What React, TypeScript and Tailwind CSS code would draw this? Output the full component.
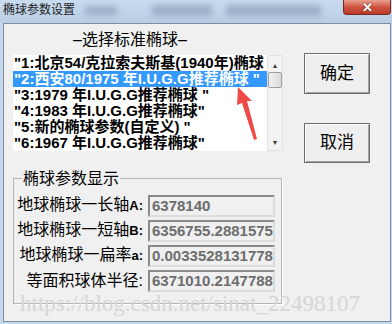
import React from 'react'

const rows = [
  '"1:北京54/克拉索夫斯基(1940年)椭球 "',
  '"2:西安80/1975 年I.U.G.G推荐椭球 "',
  '"3:1979 年I.U.G.G推荐椭球 "',
  '"4:1983 年I.U.G.G推荐椭球"',
  '"5:新的椭球参数(自定义)  "',
  '"6:1967 年I.U.G.G推荐椭球"',
]

const params = [
  { label: '地球椭球一长轴', tag: 'A:', value: '6378140' },
  { label: '地球椭球一短轴', tag: 'B:', value: '6356755.28815753' },
  { label: '地球椭球一扁率', tag: 'a:', value: '0.00335281317789' },
  { label: '等面积球体半径:', tag: '', value: '6371010.21477885' },
]

const cjk = { fontFamily: '"Liberation Sans", "Noto Sans CJK SC", sans-serif' }

function Button({ children, h }: { children: React.ReactNode; h: string }) {
  return (
    <div className={`w-[66px] ${h} border border-[#6f6f6f] bg-[#efefef] shadow-[inset_1px_1px_0_#ffffff,inset_-1px_-1px_0_#a0a0a0] flex items-center justify-center text-[17px] text-black`}>
      {children}
    </div>
  )
}

export default function App() {
  return (
    <div className="relative w-[392px] h-[324px] overflow-hidden bg-[#c4d8ee]" style={cjk}>
      {/* title bar */}
      <div className="h-[23px] flex items-start bg-gradient-to-b from-[#c9dbef] to-[#b8cde4]">
        <span className="ml-[3px] mt-[3px] text-[12px] leading-[14px] text-[#1c1c1c]">椭球参数设置</span>
        <span className="ml-[10px] mt-[6px] w-[32px] h-[9px] bg-[#8197b0] blur-[3px] opacity-60" />
        <span className="ml-[35px] mt-[5px] w-[60px] h-[11px] bg-[#8197b0] blur-[3px] opacity-60" />
        <span className="ml-[14px] mt-[5px] w-[95px] h-[11px] bg-[#8197b0] blur-[3px] opacity-60" />
        <div className="ml-auto mr-[1px] w-[48px] h-[15px] rounded-b-[4px] border border-t-0 border-[#7a2a24] bg-gradient-to-b from-[#e9a191] via-[#d0533f] to-[#b9392a] flex items-center justify-center">
          <span className="text-white text-[13px] font-bold leading-none [text-shadow:0_0_2px_#5a1a14]">✕</span>
        </div>
      </div>

      {/* client area */}
      <div className="ml-[3px] mr-[1px] h-[299px] border border-[#7f8e9f] bg-[#f0f0f0]">
        <div className="flex">
          <div className="ml-[9px] w-[270px]">
            <div className="h-[31px] pt-[8px] pl-[60px] text-[16px] leading-[16px] text-black">–选择标准椭球–</div>
            <div className="flex h-[96px] bg-white">
              <div className="flex-1 overflow-hidden">
                {rows.map((r, i) => (
                  <div
                    key={i}
                    className={`h-[16px] pl-[1px] whitespace-nowrap text-[15px] leading-[16px] font-bold ${
                      i === 1 ? 'bg-[#3399ff] text-white' : 'text-black'
                    }`}
                  >
                    {r}
                  </div>
                ))}
              </div>
              <div className="w-[16px] border border-[#e2e2e2] bg-[#f3f3f3] flex flex-col items-center">
                <span className="mt-[6px] text-[7px] leading-[7px] text-[#404040]">▲</span>
                <div className="mt-[3px] w-[14px] h-[16px] rounded-[2px] border border-[#9d9d9d] bg-gradient-to-r from-[#f2f2f2] to-[#dcdcdc]" />
                <span className="mt-auto mb-[4px] text-[7px] leading-[7px] text-[#404040]">▼</span>
              </div>
            </div>
          </div>
          <div className="ml-[21px] pt-[29px] flex flex-col gap-[29px]">
            <Button h="h-[41px]">确定</Button>
            <Button h="h-[40px]">取消</Button>
          </div>
        </div>

        {/* group box */}
        <fieldset className="ml-[9px] mt-[7px] w-[269px] h-[134px] border border-[#b5b5b5] shadow-[1px_1px_0_#ffffff] pl-[1px]">
          <legend className="ml-[7px] px-[1px] text-[16px] leading-[17px] text-black">椭球参数显示</legend>
          <div className="mt-[8px] flex flex-col gap-[3px]">
            {params.map((p) => (
              <div key={p.label} className="flex items-center h-[22px]">
                <div className="w-[128px] flex items-baseline justify-end whitespace-nowrap text-black">
                  <span className="text-[16px] leading-[18px]">{p.label}</span>
                  {p.tag && <span className="text-[13px] font-bold">{p.tag}</span>}
                </div>
                <div className="ml-[5px] w-[127px] h-[22px] overflow-hidden whitespace-nowrap border-2 border-[#8a8a8a] border-b-[#dcdcdc] border-r-[#dcdcdc] bg-[#f0f0f0] pl-[2px] text-[15px] leading-[18px] font-bold text-[#6d6d6d]">
                  {p.value}
                </div>
              </div>
            ))}
          </div>
        </fieldset>
      </div>

      {/* red arrow annotation */}
      <svg className="absolute left-[226px] top-[84px]" width="40" height="60" viewBox="0 0 40 60">
        <polygon points="12,3 26,17 21,17 31,55 28,56 16,19 11,21" fill="#f04a48" />
      </svg>

      {/* watermark */}
      <div
        className="absolute left-[20px] top-[291px] text-[23px] leading-[26px] text-[#d6d6d6] whitespace-nowrap"
        style={{ fontFamily: '"Liberation Serif", serif' }}
      >
        https://blog.csdn.net/sinat_22498107
      </div>
    </div>
  )
}
